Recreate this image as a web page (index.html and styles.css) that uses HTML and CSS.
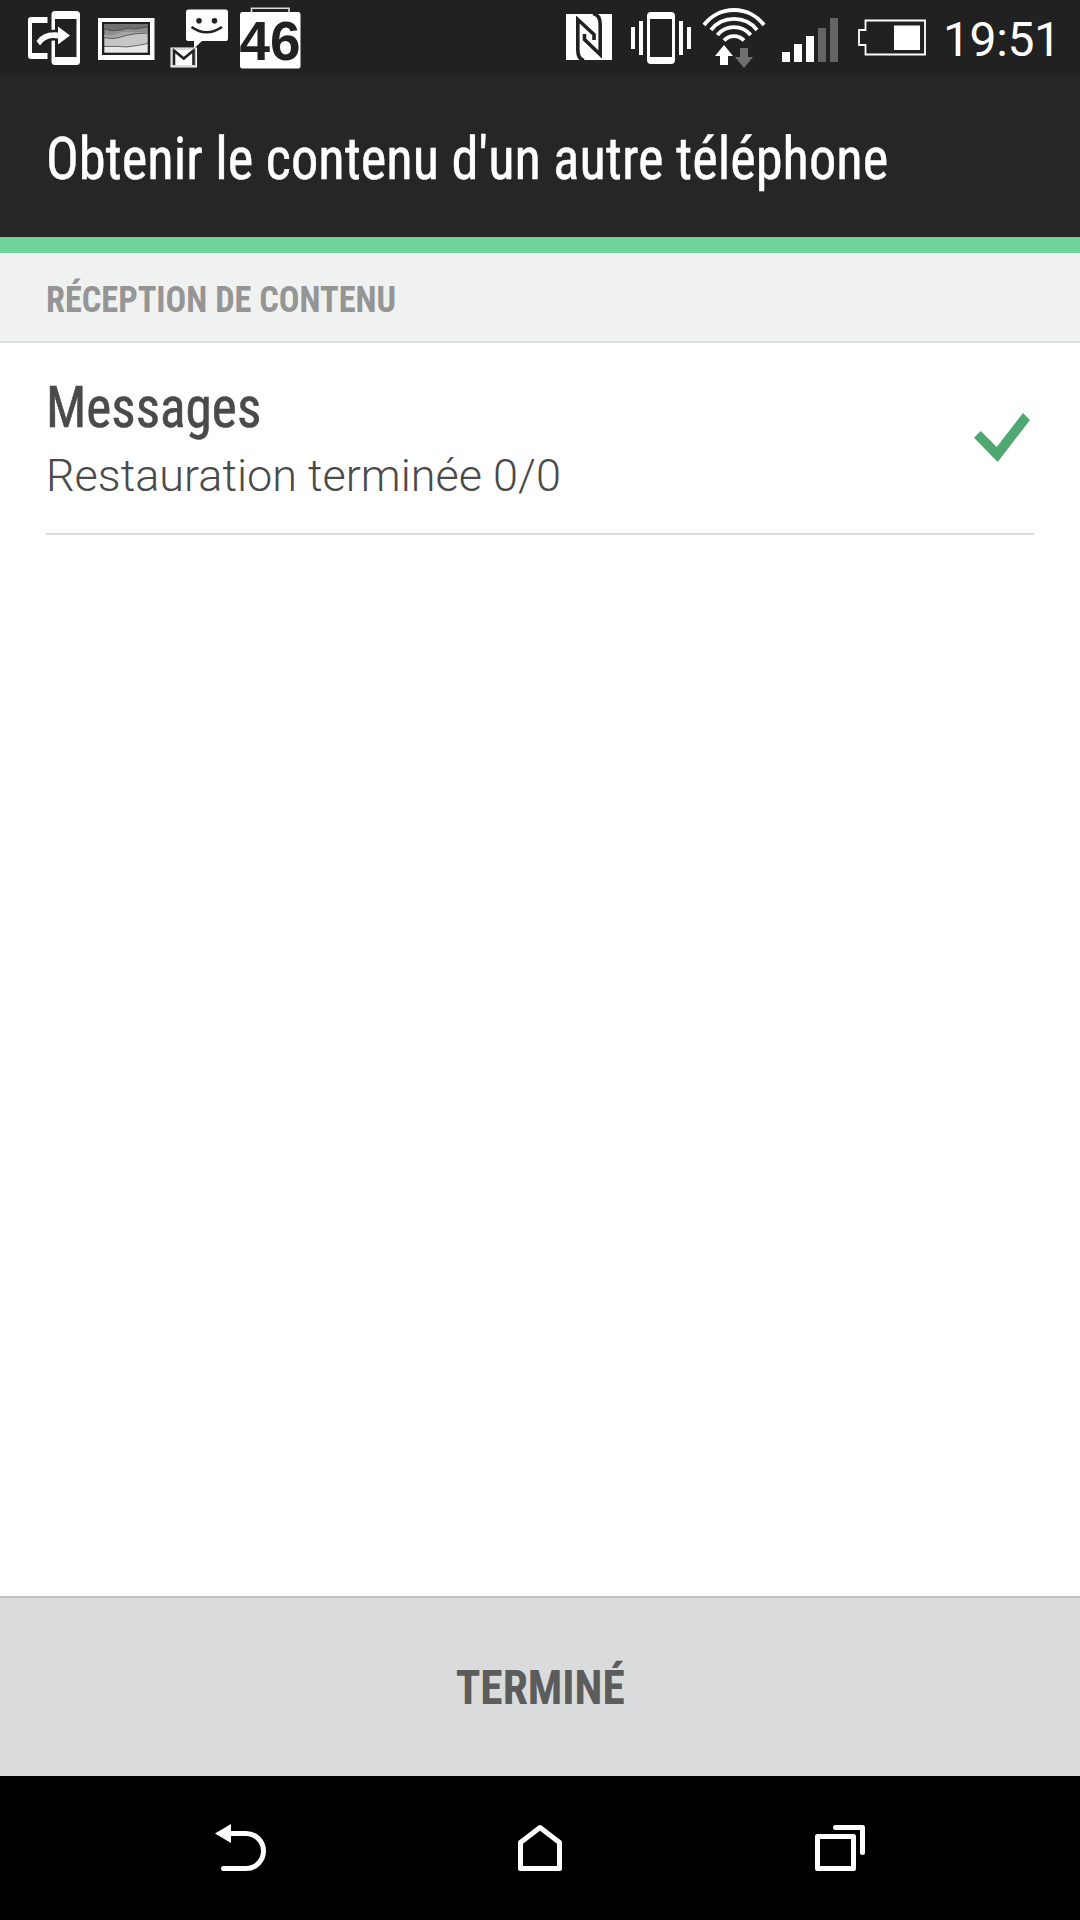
FILE: index.html
```html
<!DOCTYPE html>
<html lang="fr">

<head>
	<meta charset="utf-8" />
	<title>Obtenir le contenu d'un autre téléphone</title>
	<meta name="viewport" content="width=device-width, initial-scale=1" />
	<link rel="stylesheet" href="styles.css">
</head>

<body>
	<div class="status-bar">
		<div class="notifications">
			<!-- transfer -->
			<svg width="66" height="75" viewBox="22 0 66 75">
				<path fill="#fff" d="M31 17H47.5V23H32V53H47.5V59H31Q28 59 28 56V20Q28 17 31 17Z" />
				<path fill="#fff" fill-rule="evenodd" d="M55 11H76.5Q80 11 80 14.500V61.500Q80 65 76.500 65H55Q51.500 65 51.500 61.500V14.500Q51.500 11 55 11ZM55 19V57H76.500V19Z" />
				<path fill="#fff" stroke="#212121" stroke-width="5" paint-order="stroke" d="M36.500 41Q43 31 58 32.500V26.500L70 35.500L58 44.500V38.500Q46 36 40 45.500Z" />
			</svg>
			<!-- picture -->
			<svg width="74" height="75" viewBox="88 0 74 75">
				<path fill="#fff" d="M98 18h56.500v42H98z" />
				<path fill="#212121" d="M102 22h48v33h-48z" />
				<path fill="#707070" d="M104 24h44v29h-44z" />
				<path fill="#8e8e8e" stroke="#333" stroke-width=".6" d="M104 29Q112 32 121 30Q127 27 134 29Q142 28 148 27V53H104Z" />
				<path fill="#a5a5a5" d="M104 35Q114 36 121 32H148V53H104Z" />
				<path fill="#c6c6c6" stroke="#333" stroke-width=".7" d="M104 37.500Q114 40 124 36Q134 33 148 33V53H104Z" />
				<path fill="#e8e8e8" stroke="#333" stroke-width=".7" d="M104 46.500Q118 46 126 47Q136 46 148 43.500V53H104Z" />
				<path fill="none" stroke="#212121" stroke-width="2" d="M103 23h46v31h-46z" />
			</svg>
			<!-- sms + gmail -->
			<svg width="72" height="75" viewBox="162 0 72 75">
				<path fill="#fff" d="M188.500 9.500H226Q228 9.500 228 12V38.500Q228 41 226 41H202L194 48.500V41H188.500Q186 41 186 38.500V12Q186 9.500 188.500 9.500Z" />
				<circle cx="199" cy="20.700" r="2.800" fill="#212121" />
				<circle cx="214.500" cy="20.700" r="2.800" fill="#212121" />
				<path fill="none" stroke="#212121" stroke-width="2.600" d="M191.500 27Q206.500 37.500 222 27" />
				<path fill="#fff" d="M170.500 47.500H197V67.500H170.500Z" />
				<path fill="none" stroke="#212121" stroke-width="2.600" d="M174 65V50.500L183.700 58.500L193.500 50.500V65" />
				<path fill="none" stroke="#999" stroke-width=".7" d="M172 49H195.500V66H172Z" />
			</svg>
			<!-- counter -->
			<svg width="72" height="75" viewBox="234 0 72 75">
				<path fill="none" stroke="#ddd" stroke-width="1.600" d="M251.500 13V8.300H289V13" />
				<rect x="240" y="12" width="60.500" height="56.500" rx="2.500" fill="#fff" />
				<text class="count" x="239.500" y="59.500" textLength="61" lengthAdjust="spacingAndGlyphs">46</text>
			</svg>
		</div>
		<div class="indicators">
			<!-- nfc -->
			<svg width="65" height="75" viewBox="556 0 65 75">
				<path fill="#fff" d="M566 14H612V60H566Z" />
				<path fill="none" stroke="#212121" stroke-width="3.600" d="M584 60.500Q577.800 59 577.800 50V19.500L594 34.500V40M593 13.500Q600.200 15 600.200 24V54.500L584.500 39.500V34" />
			</svg>
			<!-- vibrate -->
			<svg width="76" height="75" viewBox="621 0 76 75">
				<path fill="#fff" fill-rule="evenodd" d="M651 12H671Q675 12 675 16V60Q675 64 671 64H651Q647 64 647 60V16Q647 12 651 12ZM650 19V57H672V19Z" />
				<path fill="#fff" d="M631 27h4v22h-4zM639 21h4v34h-4zM679 21h4v34h-4zM687 27h4v22h-4z" />
			</svg>
			<!-- wifi -->
			<svg width="77" height="75" viewBox="697 0 77 75">
				<path fill="none" stroke="#fff" stroke-width="3.800" d="M704 25A37.500 37.500 0 0 1 764 25M711 30A29.500 29.500 0 0 1 757 30M717.300 35A21.500 21.500 0 0 1 750.700 35M724 40.500A13.500 13.500 0 0 1 744 40.500" />
				<path fill="#fff" d="M724 45L733 56H728V65H720V56H715Z" />
				<path fill="#707070" d="M740 48H748V57H753L744 68L735 57H740Z" />
			</svg>
			<!-- signal -->
			<svg width="74" height="75" viewBox="774 0 74 75">
				<path fill="#fff" d="M782 52h8v10h-8zM794 44h8v18h-8zM806 36h8v26h-8z" />
				<path fill="#646464" d="M818 28h8v34h-8zM830 18h8v44h-8z" />
			</svg>
			<!-- battery -->
			<svg width="88" height="75" viewBox="848 0 88 75">
				<path fill="none" stroke="#fff" stroke-width="1.800" d="M865.500 20.500H925V54.500H865.500V45H859V30H865.500Z" />
				<path fill="#fff" d="M894 25.500h26v24.500h-26z" />
			</svg>
			<span class="clock">19:51</span>
		</div>
	</div>

	<header class="header">
		<h1 class="title condensed">Obtenir le contenu d'un autre téléphone</h1>
	</header>

	<main class="content">
		<div class="section">
			<h2 class="section-title condensed">RÉCEPTION DE CONTENU</h2>
		</div>
		<div class="item">
			<div class="item-text">
				<p class="item-name condensed">Messages</p>
				<p class="item-status">Restauration terminée 0/0</p>
			</div>
			<svg class="check" width="56" height="49" viewBox="974 413 56 49">
				<path fill="#4fa871" d="M974 437.700L980.700 431L996.700 447L1023 413L1030 420L997.700 462Z" />
			</svg>
		</div>
	</main>

	<button class="done"><span class="done-label condensed">TERMINÉ</span></button>

	<nav class="nav-bar">
		<!-- back -->
		<svg width="60" height="60" viewBox="210 1820 60 60">
			<path fill="#fff" d="M215 1833.500L231 1824V1843Z" />
			<path class="line" d="M230 1833.500H246A17.500 17.500 0 0 1 246 1868.500H223.500" />
		</svg>
		<!-- home -->
		<svg width="60" height="60" viewBox="510 1820 60 60">
			<path class="line" d="M520.500 1868.500V1842.500L540 1827.500L559.500 1842.500V1868.500Z" />
		</svg>
		<!-- recent apps -->
		<svg width="60" height="60" viewBox="810 1820 60 60">
			<path class="line" d="M817.500 1836.500H853.500V1868.500H817.500ZM835.500 1827.500H862.500V1852.500" />
		</svg>
	</nav>
</body>

</html>
```
FILE: styles.css
```css
* {
	box-sizing: border-box;
	margin: 0;
	padding: 0;
}

body {
	display: flex;
	flex-direction: column;
	height: 1920px;
	background-color: #fff;
	font-family: 'Roboto', sans-serif;
}

svg {
	display: block;
	flex: none;
}

.condensed {
	font-family: 'Roboto Condensed', 'Roboto', sans-serif;
	font-stretch: 75%;
	white-space: nowrap;
	transform-origin: left;
}

.status-bar {
	display: flex;
	justify-content: space-between;
	height: 75px;
	padding-left: 22px;
	background-color: #212121;
}

.notifications,
.indicators {
	display: flex;
}

.count {
	font: bold 56px 'Liberation Sans', sans-serif;
	fill: #212121;
}

.clock {
	width: 144px;
	padding-left: 7px;
	font-size: 48px;
	line-height: 80px;
	letter-spacing: -0.4px;
	color: #fff;
}

.header {
	height: 178px;
	padding-left: 46px;
	background-color: #262626;
	border-bottom: 16px solid #70d498;
}

.title {
	font-size: 60px;
	font-weight: 400;
	line-height: 167px;
	color: #fff;
	-webkit-text-stroke: 0.5px #fff;
	transform: scaleX(0.908);
}

.content {
	flex: 1;
}

.section {
	height: 90px;
	padding-left: 46px;
	background-color: #f0f2f1;
	border-bottom: 2px solid #dcdcdc;
}

.section-title {
	font-size: 36px;
	font-weight: 700;
	line-height: 94px;
	color: #959595;
	transform: scaleX(0.953);
}

.item {
	display: flex;
	justify-content: space-between;
	height: 192px;
	margin: 0 46px;
	padding: 32px 4px 0 0;
	border-bottom: 2px solid #dcdcdc;
	color: #4a4a4a;
}

.item-name {
	font-size: 58px;
	line-height: 64px;
	-webkit-text-stroke: 0.6px #4a4a4a;
	transform: scaleX(0.92);
}

.item-status {
	font-size: 45px;
	font-weight: 300;
	line-height: 74px;
}

.check {
	margin-top: 38px;
}

.done {
	height: 180px;
	border: 0;
	border-top: 2px solid #c2c3c5;
	background-color: #dadbdd;
	color: #5c5c5c;
}

.done-label {
	display: inline-block;
	font-size: 48px;
	font-weight: 700;
	transform: scaleX(0.948);
	transform-origin: center;
}

.nav-bar {
	display: flex;
	justify-content: space-between;
	height: 144px;
	padding: 44px 210px 0;
	background-color: #000;
}

.line {
	fill: none;
	stroke: #fff;
	stroke-width: 5;
	stroke-linecap: round;
	stroke-linejoin: round;
}
```
